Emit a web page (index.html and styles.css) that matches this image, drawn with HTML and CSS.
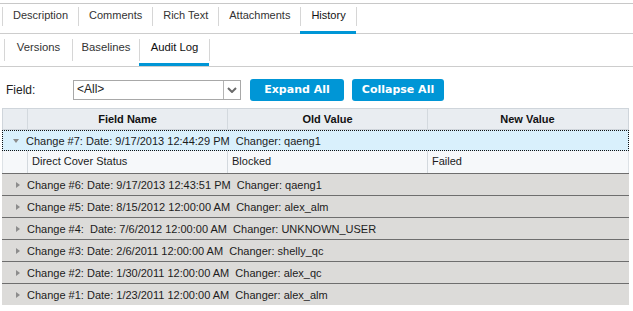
FILE: index.html
```html
<!DOCTYPE html>
<html>
<head>
<meta charset="utf-8">
<link rel="stylesheet" href="styles.css">
</head>
<body>
<div class="tabs">
  <div class="tab"><span class="lbl">Description</span></div>
  <div class="tab"><span class="lbl">Comments</span></div>
  <div class="tab"><span class="lbl">Rich Text</span></div>
  <div class="tab"><span class="lbl">Attachments</span></div>
  <div class="tab active"><span class="lbl">History</span></div>
  <div class="tab end"><span class="lbl"></span></div>
</div>
<div class="subtabs">
  <div class="stab versions"><span class="lbl">Versions</span></div>
  <div class="stab"><span class="lbl">Baselines</span></div>
  <div class="stab active"><span class="lbl">Audit Log</span></div>
  <div class="stab end"><span class="lbl"></span></div>
</div>
<div class="toolbar">
  <span class="field-label">Field:</span>
  <div class="select">
    <span class="sel-text">&lt;All&gt;</span>
    <span class="sel-btn"><svg width="10" height="6" viewBox="0 0 10 6"><path d="M1 1 L5 5 L9 1" fill="none" stroke="#6a6a6a" stroke-width="2"/></svg></span>
  </div>
  <button class="btn expand">Expand All</button>
  <button class="btn collapse">Collapse All</button>
</div>
<div class="grid">
  <div class="ghead">
    <div class="c0"></div>
    <div class="c1">Field Name</div>
    <div class="c2">Old Value</div>
    <div class="c3">New Value</div>
  </div>
  <div class="group open">
    <span class="tri-down"></span><span class="gtext">Change #7: Date: 9/17/2013 12:44:29 PM  Changer: qaeng1</span>
  </div>
  <div class="drow">
    <div class="c0"></div>
    <div class="c1">Direct Cover Status</div>
    <div class="c2">Blocked</div>
    <div class="c3">Failed</div>
  </div>
  <div class="group"><span class="tri-right"></span><span class="gtext">Change #6: Date: 9/17/2013 12:43:51 PM  Changer: qaeng1</span></div>
  <div class="group"><span class="tri-right"></span><span class="gtext">Change #5: Date: 8/15/2012 12:00:00 AM  Changer: alex_alm</span></div>
  <div class="group"><span class="tri-right"></span><span class="gtext">Change #4:  Date: 7/6/2012 12:00:00 AM  Changer: UNKNOWN_USER</span></div>
  <div class="group"><span class="tri-right"></span><span class="gtext">Change #3: Date: 2/6/2011 12:00:00 AM  Changer: shelly_qc</span></div>
  <div class="group"><span class="tri-right"></span><span class="gtext">Change #2: Date: 1/30/2011 12:00:00 AM  Changer: alex_qc</span></div>
  <div class="group"><span class="tri-right"></span><span class="gtext">Change #1: Date: 1/23/2011 12:00:00 AM  Changer: alex_alm</span></div>
</div>
</body>
</html>
```
FILE: styles.css
```css
* { box-sizing: border-box; }
html, body { margin: 0; padding: 0; background: #fff; }
body {
  font-family: "Liberation Sans", Arial, sans-serif;
  font-size: 11px;
  color: #1c1c1c;
  padding-top: 3px;
}
.tabs {
  display: flex;
  border-top: 1px solid #c8c8c8;
  border-bottom: 1px solid #cdcdcd;
  height: 31px;
  padding-left: 2px;
}
.tab {
  display: flex;
  flex-direction: column;
  border-bottom: 3px solid transparent;
  height: 30px;
}
.tab .lbl {
  margin-top: 3px;
  height: 19px;
  line-height: 17px;
  border-left: 1px solid #d6d6d6;
  padding: 0 10px;
  color: #333;
  font-size: 11px;
}
.tab.active { border-bottom-color: #0096d6; }
.tab.active .lbl { color: #111; }
.tab.end .lbl { padding: 0; }

.subtabs {
  display: flex;
  height: 33px;
  border-bottom: 1px solid #cdcdcd;
  padding-left: 4px;
}
.stab {
  display: flex;
  flex-direction: column;
  border-bottom: 3px solid transparent;
  height: 32px;
}
.stab .lbl {
  margin-top: 5px;
  height: 22px;
  line-height: 16px;
  border-left: 1px solid #d6d6d6;
  width: 67px;
  text-align: center;
  color: #333;
  font-size: 11.3px;
}
.stab.versions .lbl { width: 68px; }
.stab.active { border-bottom-color: #0096d6; }
.stab.active .lbl { color: #111; width: 70px; }
.stab.end .lbl { width: 0; }

.toolbar {
  display: flex;
  align-items: center;
  padding: 11px 0 7px 6px;
  height: 41px;
}
.field-label {
  width: 67px;
  font-size: 12px;
  color: #222;
  padding-top: 1px;
}
.select {
  display: flex;
  width: 168px;
  height: 20px;
  border: 1px solid #a8a8a8;
  background: #fff;
  margin-right: 9px;
}
.sel-text {
  flex: 1;
  padding-left: 3px;
  line-height: 17px;
  font-size: 12px;
  color: #222;
}
.sel-btn {
  width: 17px;
  border-left: 1px solid #b4b4b4;
  display: flex;
  align-items: center;
  justify-content: center;
}
.btn {
  height: 22px;
  border: 0;
  border-radius: 3px;
  background: #0096d6;
  color: #fff;
  font-family: "DejaVu Sans", Verdana, sans-serif;
  font-weight: bold;
  font-size: 11px;
  padding: 0;
  margin: 0;
}
.btn.expand { width: 94px; margin-right: 8px; }
.btn.collapse { width: 92px; }

.grid {
  width: 627px;
  margin-left: 2px;
}
.ghead {
  display: flex;
  height: 22px;
  border: 1px solid #cfd5db;
  background: #e9edf1;
  font-weight: bold;
  color: #111;
}
.ghead > div, .drow > div {
  border-right: 1px solid #d3d9de;
  line-height: 20px;
}
.ghead > div { text-align: center; }
.c0 { width: 25px; }
.c1, .c2 { width: 200px; }
.c3 { width: 199px; border-right: 0 !important; }

.group {
  display: flex;
  align-items: center;
  height: 22px;
  border-top: 1px solid #6e6e6e;
  background: #dcdbd9;
  white-space: pre;
}
.group.open {
  height: 21px;
  border: 1px dotted #111;
  background: #d9f0fc;
}
.gtext { line-height: 20px; }
.tri-right {
  width: 0; height: 0;
  border-top: 3.5px solid transparent;
  border-bottom: 3.5px solid transparent;
  border-left: 4px solid #8c8c8c;
  margin: 0 7px 0 14px;
}
.tri-down {
  width: 0; height: 0;
  border-left: 3.5px solid transparent;
  border-right: 3.5px solid transparent;
  border-top: 4px solid #8c8c8c;
  margin: 1px 7px 0 10px;
}
.drow {
  display: flex;
  height: 22px;
  background: #f6f8fa;
  border-left: 1px solid #dde2e6;
  border-right: 1px solid #dde2e6;
}
.drow > .c1, .drow > .c2, .drow > .c3 { padding-left: 4px; line-height: 21px; }
```
